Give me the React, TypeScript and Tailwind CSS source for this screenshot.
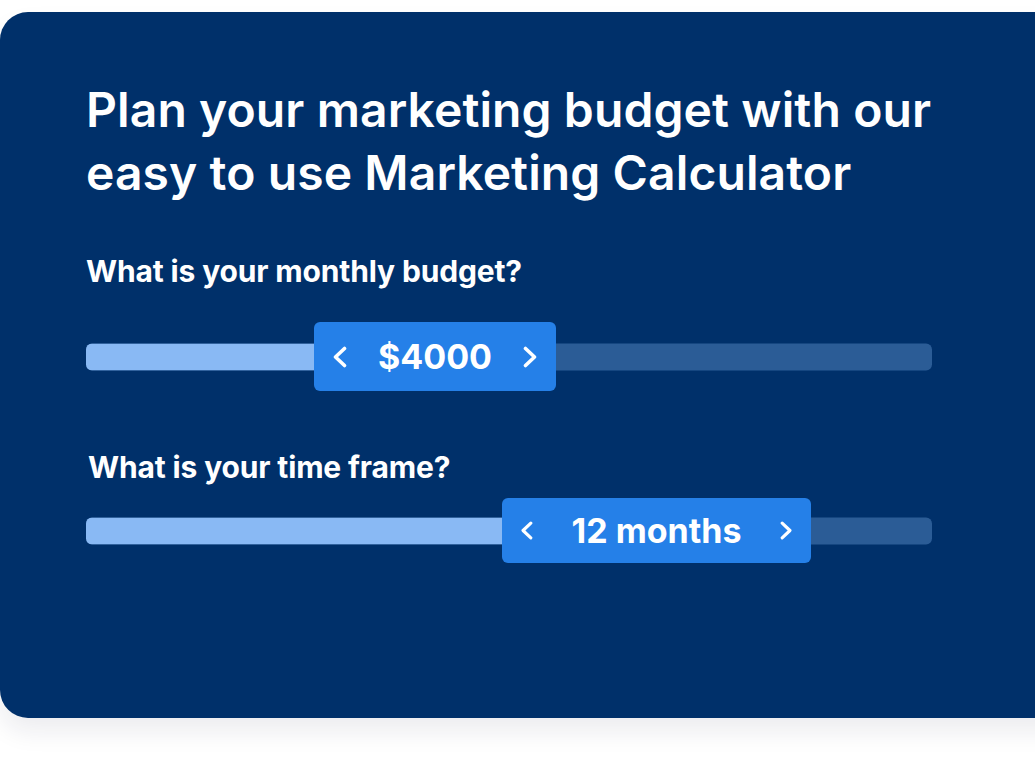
import React from "react";

interface SliderProps {
    value: string;
    fill: number;
    thumbWidth: number;
    thumbHeight: number;
    small?: boolean;
}

function Chevron({ dir, small }: { dir: "left" | "right"; small?: boolean }) {
    return (
        <svg
            width={small ? 13 : 15}
            height={small ? 19 : 22}
            viewBox="0 0 15 22"
            fill="none"
            className="shrink-0"
        >
            <path
                d={dir === "left" ? "M12.5 2.5 L3.5 11 L12.5 19.5" : "M2.5 2.5 L11.5 11 L2.5 19.5"}
                stroke="white"
                strokeWidth="3.6"
                strokeLinecap="round"
                strokeLinejoin="round"
            />
        </svg>
    );
}

function Slider({ value, fill, thumbWidth, thumbHeight, small }: SliderProps) {
    return (
        <div className="relative w-[846px]" style={{ height: thumbHeight }}>
            <div className="absolute inset-x-0 top-1/2 -translate-y-1/2 h-[27px] rounded-[6px] bg-[#2b5c96] overflow-hidden">
                <div className="h-full bg-[#89b9f4]" style={{ width: fill }} />
            </div>
            <div
                className="absolute top-0 flex items-center justify-between px-[18px] rounded-[6px] bg-[#2580e8] text-white"
                style={{ left: fill, width: thumbWidth, height: thumbHeight }}
            >
                <Chevron dir="left" small={small} />
                <span className="text-[34px] font-bold leading-none">{value}</span>
                <Chevron dir="right" small={small} />
            </div>
        </div>
    );
}

export default function App() {
    return (
        <div
            className="min-h-screen bg-white overflow-hidden pt-[12px]"
            style={{ fontFamily: "Inter, 'Noto Sans', sans-serif" }}
        >
            <div className="w-[1080px] h-[706px] rounded-l-[28px] bg-[#00306a] pl-[86px] pt-[66px] shadow-[0_14px_24px_rgba(20,30,70,0.08)]">
                <h1 className="text-white text-[48px] font-semibold leading-[63px] tracking-[0.1px]">
                    Plan your marketing budget with our
                    <br />
                    easy to use Marketing Calculator
                </h1>

                <p className="mt-[49px] text-white text-[30px] font-bold tracking-[-0.15px] leading-[36px]">
                    What is your monthly budget?
                </p>
                <div className="mt-[33px]">
                    <Slider value="$4000" fill={228} thumbWidth={242} thumbHeight={69} />
                </div>

                <p className="mt-[58px] ml-[2px] text-white text-[30px] font-bold tracking-[-0.15px] leading-[36px]">
                    What is your time frame?
                </p>
                <div className="mt-[13px]">
                    <Slider value="12 months" fill={416} thumbWidth={309} thumbHeight={65} small />
                </div>
            </div>
        </div>
    );
}
